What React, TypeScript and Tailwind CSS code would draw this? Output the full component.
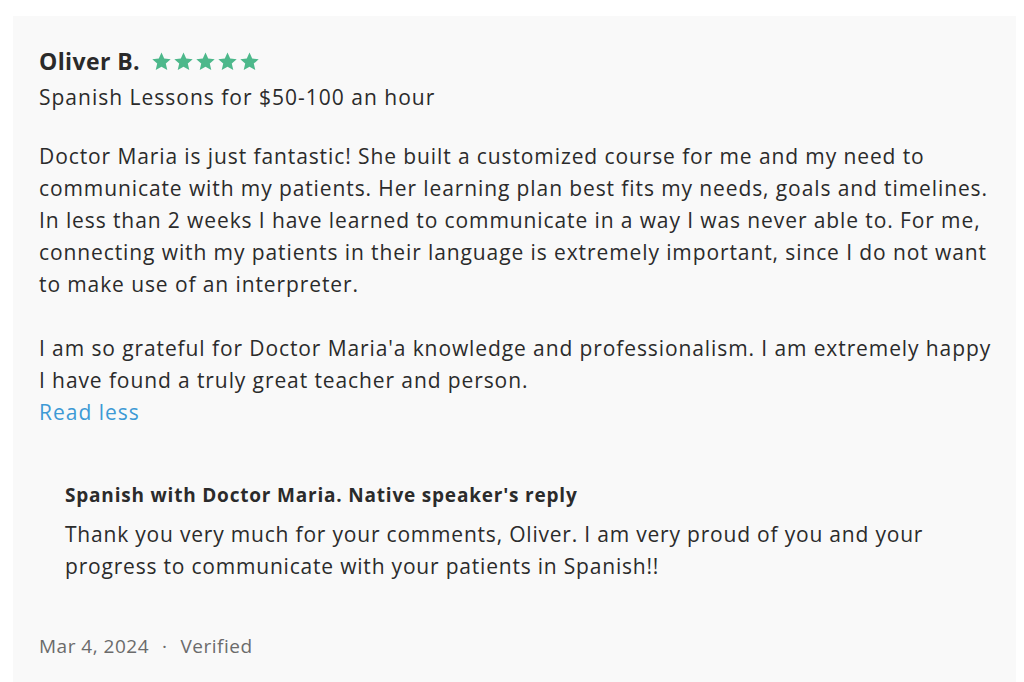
import React from "react";

function Star() {
  return (
    <svg viewBox="0 0 24 24" className="h-[21px] w-[21px]" fill="#4db88b">
      <path d="M12 1.8l3.1 6.9 7.4.7-5.6 5 1.7 7.4L12 17.9l-6.6 3.9 1.7-7.4-5.6-5 7.4-.7z" />
    </svg>
  );
}

export default function App() {
  return (
    <div
      className="flex min-h-screen flex-col bg-white px-[13px] pt-[16px] text-[#2b2b2b]"
      style={{ fontFamily: "'Open Sans', sans-serif" }}
    >
      <div className="w-[1003px] flex-1 bg-[#f9f9f9] px-[26px] pt-[30px] pb-[24px]">
        {/* Header */}
        <div className="flex items-center gap-[11px]">
          <h2 className="text-[23px] font-bold leading-[30px] tracking-[0.4px] text-[#2a2a2a]">
            Oliver B.
          </h2>
          <div className="flex gap-[1px]">
            <Star />
            <Star />
            <Star />
            <Star />
            <Star />
          </div>
        </div>
        <p className="mt-[5px] text-[21px] leading-[32px] tracking-[1px]">
          Spanish Lessons for $50-100 an hour
        </p>

        {/* Review body */}
        <div className="mt-[27px] whitespace-nowrap text-[21px] leading-[32px] tracking-[0.9px]">
          <p>
            Doctor Maria is just fantastic! She built a customized course for me and my need to
            <br />
            communicate with my patients. Her learning plan best fits my needs, goals and timelines.
            <br />
            In less than 2 weeks I have learned to communicate in a way I was never able to. For me,
            <br />
            connecting with my patients in their language is extremely important, since I do not want
            <br />
            to make use of an interpreter.
          </p>
          <p className="mt-[32px]">
            I am so grateful for Doctor Maria'a knowledge and professionalism. I am extremely happy
            <br />
            I have found a truly great teacher and person.
          </p>
          <button className="tracking-[1px] text-[#3d9ad5]">Read less</button>
        </div>

        {/* Reply */}
        <div className="mt-[52px] pl-[26px]">
          <h3 className="text-[19px] font-bold leading-[30px] tracking-[0.8px]">
            Spanish with Doctor Maria. Native speaker's reply
          </h3>
          <p className="mt-[8px] whitespace-nowrap text-[21px] leading-[32px] tracking-[0.8px]">
            Thank you very much for your comments, Oliver. I am very proud of you and your
            <br />
            progress to communicate with your patients in Spanish!!
          </p>
        </div>

        {/* Footer */}
        <div className="mt-[50px] flex items-center gap-[13px] text-[19px] leading-[28px] tracking-[0.5px] text-[#6b6b6b]">
          <span>Mar 4, 2024</span>
          <span>·</span>
          <span>Verified</span>
        </div>
      </div>
    </div>
  );
}
